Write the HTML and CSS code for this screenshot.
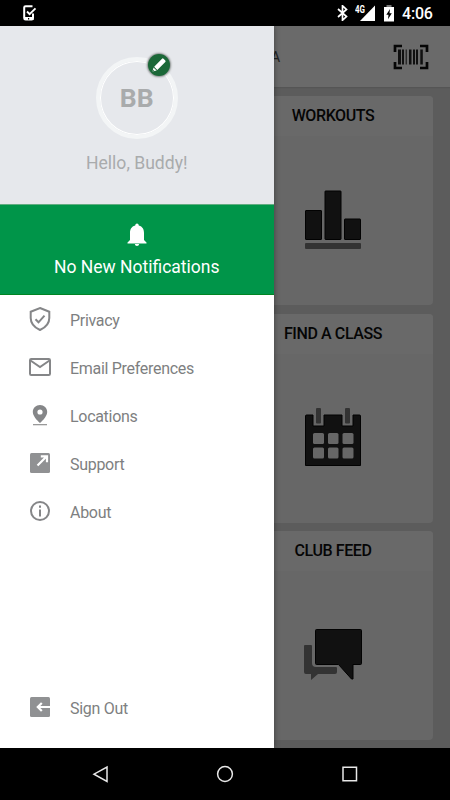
FILE: index.html
```html
<!DOCTYPE html>
<html lang="en">
<head>
<meta charset="utf-8">
<title>Menu</title>
<link rel="stylesheet" href="styles.css">
</head>
<body>
<div class="phone">
  <header class="status">
    <svg class="status-task" width="14" height="17" viewBox="0 0 14 17"><path d="M9.500 2.200H2.600Q1.200 2.200 1.200 3.500V14Q1.200 15.500 2.600 15.500H8.700Q10 15.500 10 14V9.500" fill="none" stroke="#fff" stroke-width="2"/><path d="M1 13H10.500V16H1z" fill="#fff"/><path d="M5 14h1.200v1.400H5z" fill="#000"/><path d="M4 7.500l2.600 2.700L12.500 4.300" fill="none" stroke="#fff" stroke-width="1.900"/></svg>
    <div class="status-right">
      <svg class="bt" width="11" height="16" viewBox="0 0 11 16"><path d="M1 4l8.500 7.500-4 3.700V.8l4 3.700L1 12" fill="none" stroke="#fff" stroke-width="1.700"/></svg>
      <svg class="signal" width="21" height="17" viewBox="0 0 21 17"><path d="M20 1.500V17H5z" fill="#fff"/><text x="0" y="8.600" class="network" textLength="10" lengthAdjust="spacingAndGlyphs">4G</text></svg>
      <svg class="battery" width="10" height="17" viewBox="0 0 10 17"><path d="M2.500 0h5v2h-5z" fill="#777"/><path d="M0 2h10v14.500H0z" fill="#fff"/><path d="M6 4L2.300 9.700h2.200L4 14.300l3.800-6H5.500z" fill="#000"/></svg>
      <span class="clock">4:06</span>
    </div>
  </header>
  <div class="stage">
    <main class="home">
      <div class="toolbar">
        <span class="toolbar-title">A</span>
        <svg class="barcode" width="36" height="26" viewBox="0 0 36 26"><path d="M9 2H2v6M27 2h7v6M2 18v6h7M34 18v6h-7" fill="none" stroke="#060606" stroke-width="2.700"/><path d="M5 5.500h3v15H5zM9 5.500h2v15H9zM12.700 5.500h1v15h-1zM16 5.500h2.500v15H16zM20 5.500h2v15h-2zM23 5.500h2v15h-2zM27.300 5.500h2.500v15h-2.500z" fill="#101010"/></svg>
      </div>
      <div class="cards">
        <section class="card">
          <h2>WORKOUTS</h2>
          <div class="card-body"><svg width="60" height="60" viewBox="0 0 60 60"><g fill="#111" stroke="#020202"><rect x="2.500" y="20.500" width="16" height="29" rx=".5"/><rect x="22" y="1" width="16" height="48.500" rx=".5"/><rect x="41.500" y="29" width="16" height="20.500" rx=".5"/></g><rect x="2" y="53" width="56" height="6" rx="1" fill="#333"/></svg></div>
        </section>
        <section class="card">
          <h2>FIND A CLASS</h2>
          <div class="card-body"><svg width="60" height="60" viewBox="0 0 60 60"><path d="M2.500 8q0-1 1-1H10v11h11V7h18v11h11V7h6.500q1 0 1 1v49.500h-55z" fill="#111" stroke="#020202"/><g fill="#333"><rect x="13" y="0" width="5" height="15.500" rx="1"/><rect x="42" y="0" width="5" height="15.500" rx="1"/></g><g fill="#676767"><rect x="10" y="25" width="11" height="11" rx="1.500"/><rect x="25" y="25" width="10.500" height="11" rx="1.500"/><rect x="39.500" y="25" width="11" height="11" rx="1.500"/><rect x="10" y="39.500" width="11" height="11" rx="1.500"/><rect x="25" y="39.500" width="10.500" height="11" rx="1.500"/><rect x="39.500" y="39.500" width="11" height="11" rx="1.500"/></g></svg></div>
        </section>
        <section class="card">
          <h2>CLUB FEED</h2>
          <div class="card-body"><svg width="60" height="60" viewBox="0 0 60 60"><path d="M2 20h6q1 0 1 1v17q0 4 4 4h20q1 0 1 1v4q0 2-2 2H15l-7 6V49H3q-2 0-2-2V21q0-1 1-1z" fill="#333"/><path d="M13.500 4.500h44q1 0 1 1v33q0 1-1 1h-7.500V54L48.500 54 35.500 39.500h-22q-1 0-1-1v-33q0-1 1-1z" fill="#111" stroke="#020202"/></svg></div>
        </section>
      </div>
    </main>
    <aside class="drawer">
      <div class="profile">
        <div class="avatar">BB
          <span class="edit"><svg width="22" height="22" viewBox="0 0 22 22"><path d="M4.500 17.500l1-4 3.200 3.100z" fill="#fff"/><path d="M6.200 12.700L14 4.700q.8-.7 1.500 0l1.800 1.700q.7.800 0 1.500l-8 8z" fill="#fff"/><path d="M4.700 17.300l.4-1.600 1.200 1.200z" fill="#1b6838"/></svg></span>
        </div>
        <p class="hello">Hello, Buddy!</p>
      </div>
      <div class="notice">
        <svg width="20" height="24" viewBox="0 0 20 24"><path d="M10 .5q1.700 0 1.800 2c3.800 1 5.200 4 5.200 7.500V17l2.500 2.500v.9H.5v-.9L3 17v-7C3 6.500 4.400 3.500 8.200 2.500q.1-2 1.800-2zM7.800 21h4.400q-.3 2-2.200 2t-2.200-2z" fill="#fff"/></svg>
        <p>No New Notifications</p>
      </div>
      <nav class="menu">
        <a class="item"><svg viewBox="0 0 24 26"><path d="M12 2L21.300 5.700V12c0 5.500-4 9.600-9.300 12-5.300-2.400-9.300-6.500-9.300-12V5.700z" fill="none" stroke="#858688" stroke-width="2"/><path d="M7.500 13.300l3 3 6-6.600" fill="none" stroke="#858688" stroke-width="2"/></svg><span>Privacy</span></a>
        <a class="item"><svg viewBox="0 0 24 26"><rect x="2" y="5" width="20" height="16" rx="1.200" fill="none" stroke="#858688" stroke-width="2"/><path d="M2.500 6.500L12 13l9.500-6.500" fill="none" stroke="#858688" stroke-width="2"/></svg><span>Email Preferences</span></a>
        <a class="item"><svg viewBox="0 0 24 26"><path fill-rule="evenodd" d="M12 3c4 0 7.200 3 7.200 7 0 5-7.200 11-7.200 11S4.800 15 4.800 10c0-4 3.200-7 7.200-7zm0 4.400a2.600 2.600 0 1 0 0 5.200 2.600 2.600 0 0 0 0-5.200z" fill="#858688"/><path d="M5 22h14v1.300H5z" fill="#999"/></svg><span>Locations</span></a>
        <a class="item"><svg viewBox="0 0 24 26"><rect x="2" y="3" width="20" height="20" rx="1.500" fill="#909193"/><path d="M9.500 15.500l9-9M12.800 6.300h6.200v6" fill="none" stroke="#fff" stroke-width="2.200"/></svg><span>Support</span></a>
        <a class="item"><svg viewBox="0 0 24 26"><circle cx="12" cy="13" r="9" fill="none" stroke="#858688" stroke-width="2"/><path d="M11 7.500h2v2.200h-2zM11 11.500h2v7h-2z" fill="#858688"/></svg><span>About</span></a>
        <a class="item sign-out"><svg viewBox="0 0 24 26"><rect x="2" y="3" width="20" height="20" rx="1.500" fill="#909193"/><path d="M22 13H10M13.800 9l-4 4 4 4" fill="none" stroke="#fff" stroke-width="2.200"/></svg><span>Sign Out</span></a>
      </nav>
    </aside>
  </div>
  <footer class="navbar">
    <svg viewBox="0 0 20 20"><path d="M17 3v14.500L4 10.200z" fill="none" stroke="#e8e8e8" stroke-width="1.500"/></svg>
    <svg viewBox="0 0 20 20"><circle cx="10" cy="10" r="7.400" fill="none" stroke="#e8e8e8" stroke-width="1.500"/></svg>
    <svg viewBox="0 0 20 20"><path d="M3 3.200h13.500v13.500H3z" fill="none" stroke="#e8e8e8" stroke-width="1.500"/></svg>
  </footer>
</div>
</body>
</html>
```

FILE: styles.css
```css
* { box-sizing: border-box; margin: 0; padding: 0; }
body { font-family: Roboto, "Liberation Sans", sans-serif; background: #000; }
svg { display: block; flex: none; }
.phone { width: 450px; height: 800px; display: grid; grid-template-rows: 26px 722px 52px; overflow: hidden; background: #000; }
.status { display: flex; justify-content: space-between; padding: 4px 17px 0 22.500px; color: #fff; }
.status-right { display: flex; }
.bt { margin: 1px 7px 0 0; }
.signal { margin-right: 8px; }
.battery { margin: 1px 8px 0 0; }
.network { font: 700 10px Roboto, sans-serif; fill: #fff; paint-order: stroke; stroke: #000; stroke-width: 1px; }
.clock { width: 31px; font-size: 16px; font-weight: 500; line-height: 20px; letter-spacing: -.2px; white-space: nowrap; }
.stage { display: grid; grid-template: 722px / 450px; }
.home, .drawer { grid-area: 1 / 1; }
.home { background: #5c5c5c; }
.toolbar { height: 61px; background: #6a6a6a; display: flex; justify-content: space-between; align-items: center; padding: 0 21.500px 0 271px; box-shadow: 0 1px 1px #555; }
.toolbar-title { font-size: 14px; color: #222; }
.cards { display: grid; grid-template-rows: repeat(3, 209px); row-gap: 8.500px; padding: 9px 17.500px 0 233.500px; }
.card { background: #676767; border-radius: 4px; overflow: hidden; }
.card h2 { height: 40px; background: #696969; color: #050505; font-size: 16px; font-weight: 500; letter-spacing: -.4px; line-height: 40px; text-align: center; white-space: nowrap; }
.card-body { height: 168px; display: flex; justify-content: center; align-items: center; }
.drawer { width: 273.500px; background: #fff; box-shadow: 0 0 6px rgba(0, 0, 0, .4); clip-path: inset(0 -20px 0 0); display: grid; grid-template-rows: 178px 91px 1fr; }
.profile { background: #e6e8ec; display: flex; flex-direction: column; align-items: center; padding-top: 31px; }
.avatar { position: relative; width: 82px; height: 82px; border: 4px solid #f3f5f6; border-radius: 50%; box-shadow: inset 0 0 0 1px #fff; color: #a9abac; font-size: 26.500px; font-weight: 700; line-height: 74px; text-align: center; }
.edit { position: absolute; top: -7.500px; right: 3.500px; width: 22px; height: 22px; border-radius: 50%; background: #1b6838; box-shadow: 0 0 2px 1px #858a88; }
.hello { margin-top: 12px; color: #a9abac; font-size: 17.600px; line-height: 24px; }
.notice { background: #009549; border-top: 1px solid #62ad81; border-bottom: 1px solid #008423; color: #fff; display: flex; flex-direction: column; align-items: center; padding-top: 18px; }
.notice p { margin-top: 7.500px; font-size: 17.500px; line-height: 24px; }
.menu { display: flex; flex-direction: column; padding-bottom: 17px; }
.item { height: 48px; display: flex; align-items: center; gap: 18px; padding-left: 28px; color: #7e7f81; font-size: 16px; letter-spacing: -.3px; }
.item svg { width: 24px; height: 26px; }
.item span { padding-top: 2px; }
.sign-out { margin-top: auto; }
.navbar { display: flex; justify-content: space-between; align-items: center; padding: 0 90px; }
.navbar svg { width: 20px; height: 20px; }
```
